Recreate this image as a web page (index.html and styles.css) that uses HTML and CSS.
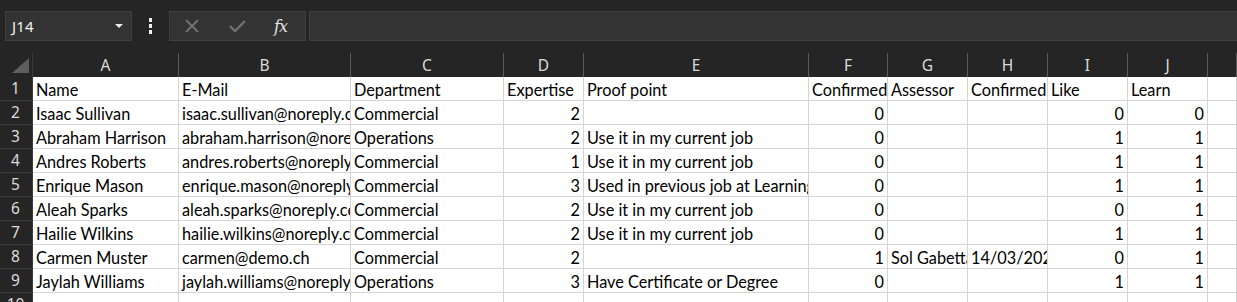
FILE: index.html
```html
<!DOCTYPE html>
<html>
<head>
<meta charset="utf-8">
<link rel="stylesheet" href="styles.css">
</head>
<body>
<div class="app">
  <div class="toolbar">
    <div class="namebox">
      <span class="ref">J14</span>
      <svg class="caret" width="8" height="4" viewBox="0 0 8 4"><path d="M0 0H8L4 4Z" fill="#ececec"/></svg>
    </div>
    <div class="dots"><i></i><i></i><i></i></div>
    <div class="fxbtns">
      <svg class="ico" width="14" height="14" viewBox="0 0 14 14"><path d="M1 1L13 13M13 1L1 13" stroke="#707070" stroke-width="2" fill="none"/></svg>
      <svg class="ico" width="17" height="14" viewBox="0 0 17 14"><path d="M1 7L6 12L16 2" stroke="#707070" stroke-width="2.4" fill="none"/></svg>
      <span class="fx">fx</span>
    </div>
    <div class="formula"></div>
  </div>
  <div class="sheet">
    <div class="corner"><svg width="17" height="15" viewBox="0 0 17 15"><path d="M17 0V15H0Z" fill="#5e5e5e"/></svg></div>
    <div class="ch">A</div><div class="ch">B</div><div class="ch">C</div><div class="ch">D</div><div class="ch">E</div><div class="ch">F</div><div class="ch">G</div><div class="ch">H</div><div class="ch">I</div><div class="ch">J</div><div class="ch"></div>

    <div class="rh">1</div>
    <div class="c">Name</div><div class="c">E-Mail</div><div class="c">Department</div><div class="c">Expertise</div><div class="c">Proof point</div><div class="c">Confirmed</div><div class="c">Assessor</div><div class="c">Confirmed</div><div class="c">Like</div><div class="c">Learn</div><div class="c"></div>

    <div class="rh">2</div>
    <div class="c">Isaac Sullivan</div><div class="c">isaac.sullivan@noreply.com</div><div class="c">Commercial</div><div class="c n">2</div><div class="c"></div><div class="c n">0</div><div class="c"></div><div class="c"></div><div class="c n">0</div><div class="c n">0</div><div class="c"></div>

    <div class="rh">3</div>
    <div class="c">Abraham Harrison</div><div class="c">abraham.harrison@noreply.com</div><div class="c">Operations</div><div class="c n">2</div><div class="c">Use it in my current job</div><div class="c n">0</div><div class="c"></div><div class="c"></div><div class="c n">1</div><div class="c n">1</div><div class="c"></div>

    <div class="rh">4</div>
    <div class="c">Andres Roberts</div><div class="c">andres.roberts@noreply.com</div><div class="c">Commercial</div><div class="c n">1</div><div class="c">Use it in my current job</div><div class="c n">0</div><div class="c"></div><div class="c"></div><div class="c n">1</div><div class="c n">1</div><div class="c"></div>

    <div class="rh">5</div>
    <div class="c">Enrique Mason</div><div class="c">enrique.mason@noreply.com</div><div class="c">Commercial</div><div class="c n">3</div><div class="c">Used in previous job at Learning</div><div class="c n">0</div><div class="c"></div><div class="c"></div><div class="c n">1</div><div class="c n">1</div><div class="c"></div>

    <div class="rh">6</div>
    <div class="c">Aleah Sparks</div><div class="c">aleah.sparks@noreply.com</div><div class="c">Commercial</div><div class="c n">2</div><div class="c">Use it in my current job</div><div class="c n">0</div><div class="c"></div><div class="c"></div><div class="c n">0</div><div class="c n">1</div><div class="c"></div>

    <div class="rh">7</div>
    <div class="c">Hailie Wilkins</div><div class="c">hailie.wilkins@noreply.com</div><div class="c">Commercial</div><div class="c n">2</div><div class="c">Use it in my current job</div><div class="c n">0</div><div class="c"></div><div class="c"></div><div class="c n">1</div><div class="c n">1</div><div class="c"></div>

    <div class="rh">8</div>
    <div class="c">Carmen Muster</div><div class="c">carmen@demo.ch</div><div class="c">Commercial</div><div class="c n">2</div><div class="c"></div><div class="c n">1</div><div class="c">Sol Gabetta</div><div class="c">14/03/2023</div><div class="c n">0</div><div class="c n">1</div><div class="c"></div>

    <div class="rh">9</div>
    <div class="c">Jaylah Williams</div><div class="c">jaylah.williams@noreply.com</div><div class="c">Operations</div><div class="c n">3</div><div class="c">Have Certificate or Degree</div><div class="c n">0</div><div class="c"></div><div class="c"></div><div class="c n">1</div><div class="c n">1</div><div class="c"></div>

    <div class="rh">10</div>
    <div class="c"></div><div class="c"></div><div class="c"></div><div class="c"></div><div class="c"></div><div class="c"></div><div class="c"></div><div class="c"></div><div class="c"></div><div class="c"></div><div class="c"></div>
  </div>
</div>
</body>
</html>
```

FILE: styles.css
```css
* { box-sizing: border-box; }
html, body { margin: 0; padding: 0; }
body {
  background: #252525;
  width: 1237px;
  height: 302px;
  overflow: hidden;
  font-family: "Lato", "Open Sans", sans-serif;
}
.app { display: flex; flex-direction: column; }

.toolbar {
  display: flex;
  align-items: center;
  height: 53px;
  padding: 11px 0 12px 5px;
}
.namebox {
  width: 127px;
  height: 30px;
  background: #333333;
  border: 1px solid #3f3f3f;
  display: flex;
  align-items: center;
  justify-content: space-between;
  padding: 0 8px 0 6px;
}
.ref {
  color: #f0f0f0;
  font-family: "Noto Sans", sans-serif;
  font-size: 15px;
  letter-spacing: 0.2px;
}
.caret { display: block; }
.dots {
  width: 37px;
  height: 30px;
  display: flex;
  flex-direction: column;
  align-items: center;
  justify-content: center;
  gap: 2.5px;
}
.dots i {
  display: block;
  width: 3.5px;
  height: 3.5px;
  background: #eeeeee;
}
.fxbtns {
  width: 137px;
  height: 30px;
  background: #333333;
  border: 1px solid #3f3f3f;
  display: flex;
  align-items: center;
  padding-left: 15px;
}
.fxbtns .ico { display: block; }
.fxbtns .ico:first-child { margin-right: 30px; }
.fx {
  margin-left: 28px;
  color: #e4e4e4;
  font-family: "DejaVu Serif", "Liberation Serif", serif;
  font-style: italic;
  font-size: 16px;
  letter-spacing: -1px;
}
.formula {
  flex: 1;
  margin-left: 3px;
  height: 30px;
  background: #333333;
  border: 1px solid #3f3f3f;
  border-right: none;
}

.sheet {
  display: grid;
  grid-template-columns: 33px 146px 172px 153px 80px 225px 79px 80px 80px 80px 80px 1fr;
  grid-auto-rows: 24px;
}
.corner {
  display: flex;
  align-items: flex-end;
  justify-content: flex-end;
  padding: 0 3px 4px 0;
  border-right: 1px solid #3a3a3a;
}
.corner svg { display: block; }
.ch {
  color: #dcdcdc;
  font-family: "Noto Sans", sans-serif;
  font-size: 15.5px;
  text-align: center;
  line-height: 24px;
  border-right: 1px solid #5a5a5a;
}
.rh {
  color: #dcdcdc;
  font-family: "Noto Sans", sans-serif;
  font-size: 15.5px;
  text-align: center;
  line-height: 23px;
  border-bottom: 1px solid #3a3a3a;
  border-right: 1px solid #3a3a3a;
  padding-right: 1px;
}
.c {
  background: #ffffff;
  color: #000000;
  font-size: 16.3px;
  line-height: 23px;
  padding: 1px 2px 0 3px;
  white-space: nowrap;
  overflow: hidden;
  border-right: 1px solid #d4d4d4;
  border-bottom: 1px solid #d4d4d4;
}
.c.n { text-align: right; padding-right: 3px; padding-left: 2px; }
```
